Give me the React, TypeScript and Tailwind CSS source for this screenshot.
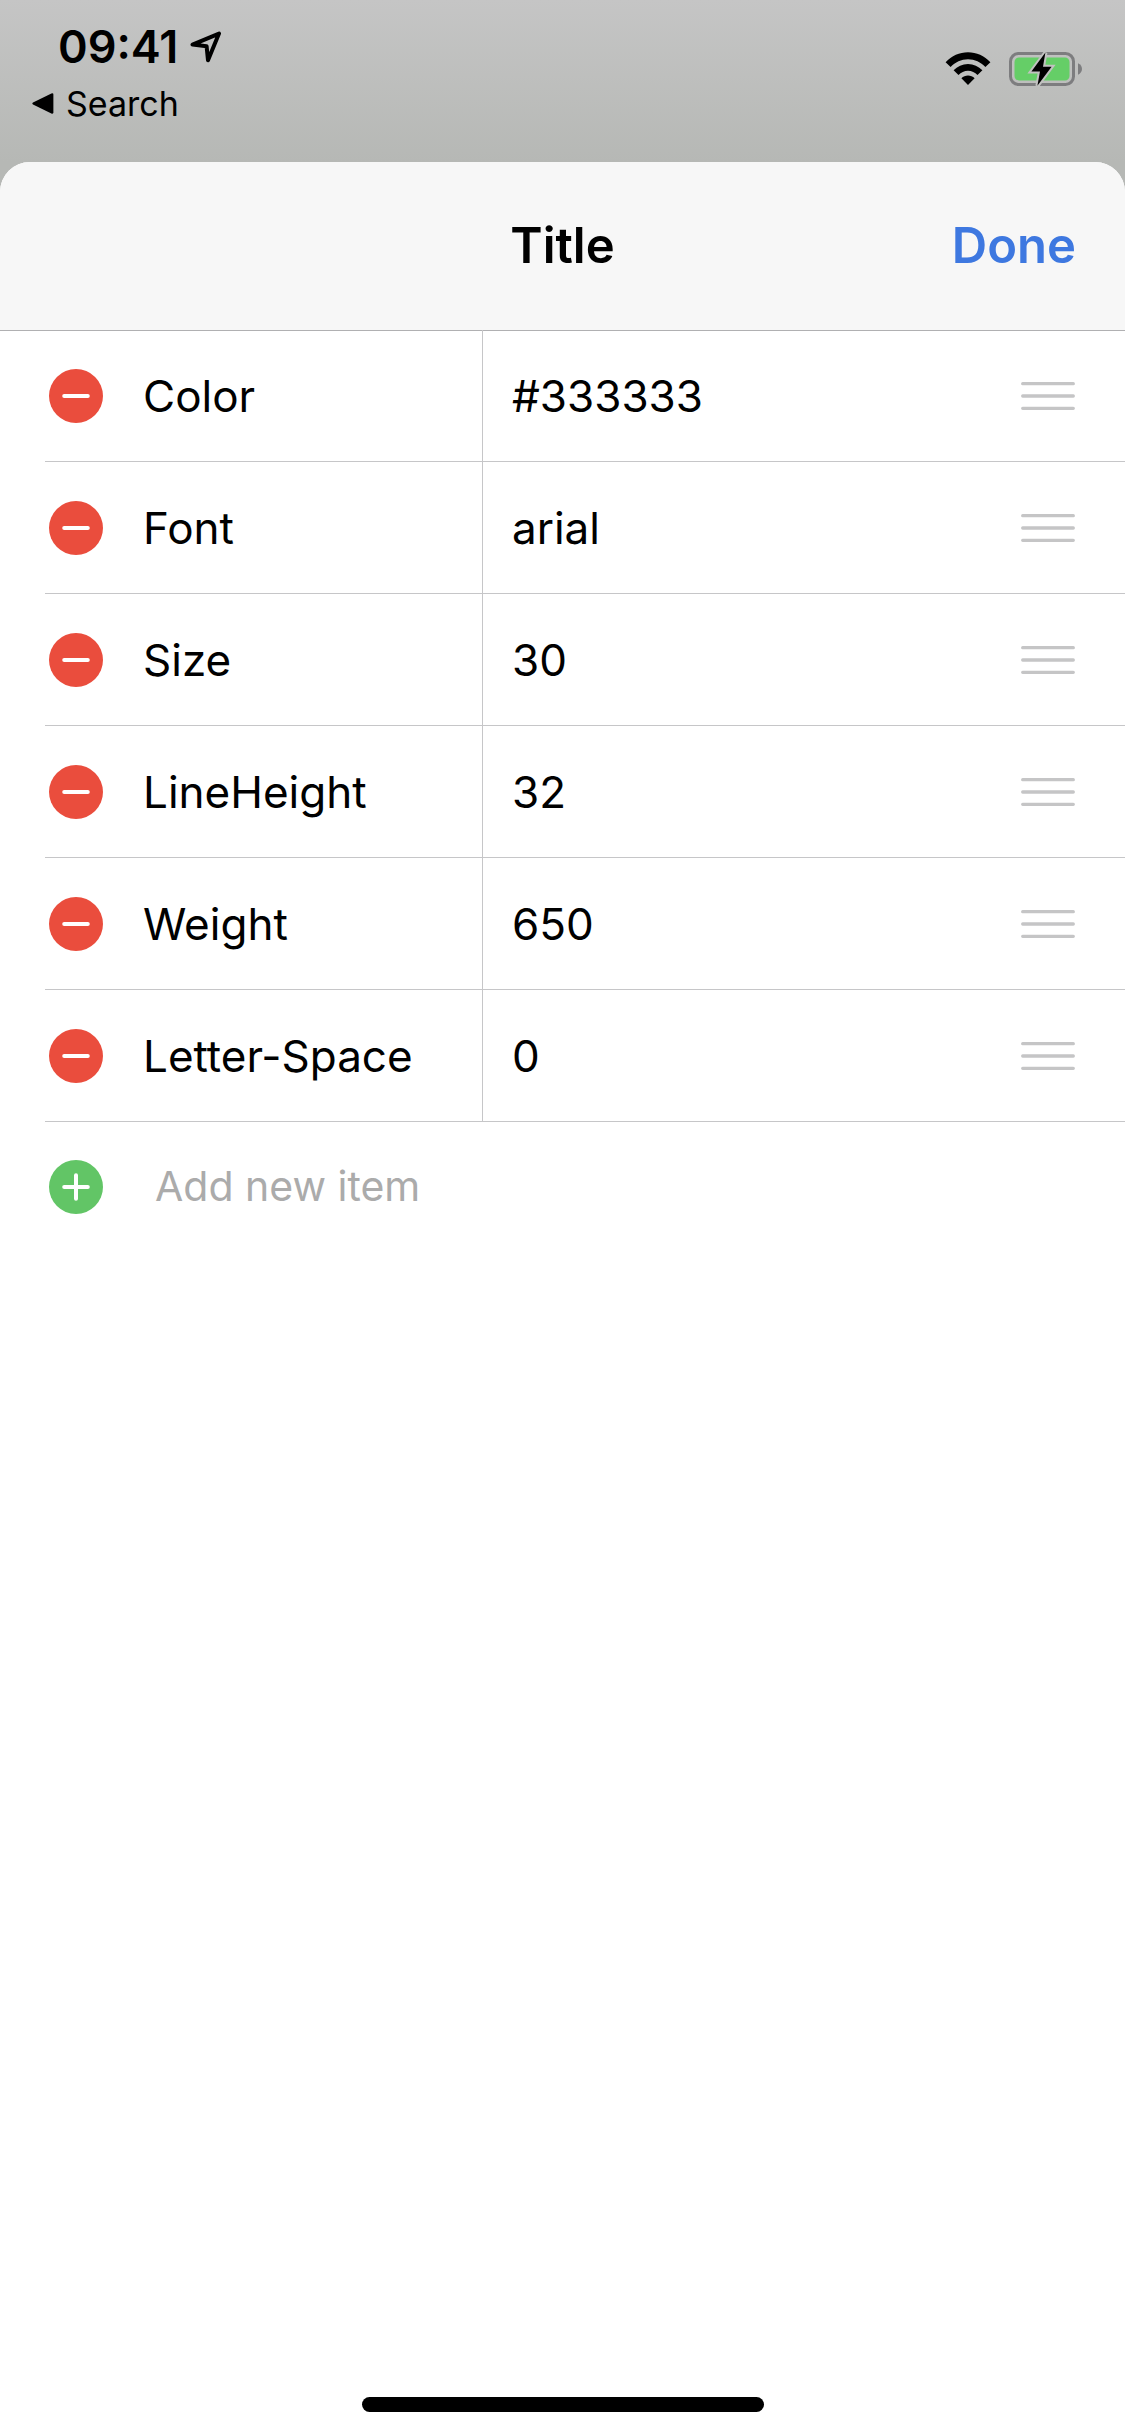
import React, { useState } from 'react';

/**
 * StyleEditorSheet
 * - iOS style modal sheet that lists the attributes of a text style
 * - Rows: remove button / name / value / drag handle, then an "add" row
 */

type Item = { id: string; name: string; value: string };

const initialItems: Item[] = [
    { id: 'color', name: 'Color', value: '#333333' },
    { id: 'font', name: 'Font', value: 'arial' },
    { id: 'size', name: 'Size', value: '30' },
    { id: 'line-height', name: 'LineHeight', value: '32' },
    { id: 'weight', name: 'Weight', value: '650' },
    { id: 'letter-space', name: 'Letter-Space', value: '0' },
];

function LocationIcon() {
    return (
        <svg className="h-8 w-8" viewBox="0 0 32 32" fill="none" stroke="#000" strokeWidth="4" strokeLinejoin="round" aria-hidden="true">
            <path d="M2.5 13.6 29 2.6 18 29.2 16.6 15.2Z" />
        </svg>
    );
}

function WifiIcon() {
    return (
        <svg className="h-[34px] w-[46px]" viewBox="0 0 46 34" aria-hidden="true">
            <path d="M0.6 10.2C6.6 3.9 14.5 0.3 23 0.3S39.4 3.9 45.4 10.2L40.4 15C35.8 10.2 29.7 7.3 23 7.3S10.2 10.2 5.6 15Z" />
            <path d="M8.6 18.2C12.4 14.2 17.4 11.9 23 11.9S33.6 14.2 37.4 18.2L32.5 23C30 20.4 26.7 18.8 23 18.8S16 20.4 13.5 23Z" />
            <path d="M16.4 26.3C18.2 24.5 20.5 23.5 23 23.5S27.8 24.5 29.6 26.3L23 33Z" />
        </svg>
    );
}

function BatteryIcon() {
    return (
        <svg className="h-[38px] w-[74px]" viewBox="0 0 74 38" aria-hidden="true">
            <rect x="1.5" y="3.5" width="63" height="31" rx="8" fill="none" stroke="#7d7d7f" strokeWidth="3" />
            <path d="M69 13.3C71.5 14.4 73 16.5 73 19S71.5 23.6 69 24.7Z" fill="#7d7d7f" />
            <rect x="5.5" y="7.5" width="55" height="23" rx="4.5" fill="#65ce67" />
            <path
                d="M36.4 2.6 22.4 21.4H31L28.4 35.8 42.6 16.8H34Z"
                fill="#000"
                stroke="#c1c2c0"
                strokeWidth="4"
                paintOrder="stroke"
            />
        </svg>
    );
}

function BadgeIcon({ kind }: { kind: 'remove' | 'add' }) {
    return (
        <svg className="h-[54px] w-[54px]" viewBox="0 0 54 54" aria-hidden="true">
            <circle cx="27" cy="27" r="27" fill={kind === 'add' ? '#62c566' : '#ea4d3d'} />
            <path
                d={kind === 'add' ? 'M15.2 27H38.8M27 15.2V38.8' : 'M15.2 27H38.8'}
                stroke="#fff"
                strokeWidth="4"
                strokeLinecap="round"
            />
        </svg>
    );
}

function HandleIcon() {
    return (
        <svg className="h-7 w-[54px]" viewBox="0 0 54 28" aria-hidden="true">
            <path d="M1.7 1.7H52.3M1.7 14H52.3M1.7 26.3H52.3" stroke="#c5c5c6" strokeWidth="3.3" strokeLinecap="round" />
        </svg>
    );
}

function StatusBar() {
    return (
        <div className="flex h-[162px] justify-between bg-linear-to-b from-[#c5c5c5] to-[#b6b8b5] pt-5 pr-[42px] pl-8">
            <div>
                <div className="flex h-[54px] items-center gap-3 pl-[26px]">
                    <span className="text-[45px] font-semibold">09:41</span>
                    <LocationIcon />
                </div>
                <a href="#search" className="flex h-[58px] items-center gap-3 text-[34px]">
                    <svg className="h-[21px] w-[22px]" viewBox="0 0 22 21" aria-hidden="true">
                        <path d="M1 9.4 19.4 0.5Q21.4-0.2 21.4 1.8V19.2Q21.4 21.2 19.4 20.4L1 11.6Q-0.4 10.5 1 9.4Z" />
                    </svg>
                    Search
                </a>
            </div>
            <div className="flex h-[98px] items-center gap-[18px]">
                <WifiIcon />
                <BatteryIcon />
            </div>
        </div>
    );
}

export default function StyleEditorSheet() {
    const [items, setItems] = useState(initialItems);
    const [draft, setDraft] = useState('');

    const remove = (id: string) => setItems(list => list.filter(i => i.id !== id));

    const update = (id: string, value: string) =>
        setItems(list => list.map(i => (i.id === id ? { ...i, value } : i)));

    const add = () => {
        if (!draft.trim()) return;
        setItems(list => [...list, { id: `${draft}-${list.length}`, name: draft, value: '' }]);
        setDraft('');
    };

    return (
        <div className="flex min-h-dvh flex-col bg-[#b6b8b5] font-[Inter,sans-serif] text-black">
            <StatusBar />

            <main className="flex flex-1 flex-col overflow-hidden rounded-t-[30px] bg-white">
                {/* Header */}
                <header className="grid h-[169px] grid-cols-3 items-center border-b border-[#b0b0b2] bg-[#f7f7f7] px-[49px] text-[49px] font-semibold">
                    <h1 className="col-start-2 text-center">Title</h1>
                    <button type="button" className="justify-self-end text-[#3e78e0]">
                        Done
                    </button>
                </header>

                {/* Attributes */}
                <ul className="-mt-px pl-[45px]">
                    {items.map(item => (
                        <li key={item.id} className="flex h-[132px] items-center border-b border-[#c6c6c8] pr-[50px] pl-1 text-[44px]">
                            <button type="button" aria-label={`Remove ${item.name}`} onClick={() => remove(item.id)}>
                                <BadgeIcon kind="remove" />
                            </button>
                            <label
                                htmlFor={item.id}
                                className="flex w-[380px] items-center self-stretch border-r border-[#c6c6c8] pl-10"
                            >
                                {item.name}
                            </label>
                            <input
                                id={item.id}
                                className="min-w-0 flex-1 bg-transparent pl-[29px] outline-none"
                                value={item.value}
                                onChange={e => update(item.id, e.target.value)}
                            />
                            <button type="button" aria-label={`Move ${item.name}`}>
                                <HandleIcon />
                            </button>
                        </li>
                    ))}
                </ul>

                {/* Add row */}
                <div className="flex h-[130px] items-center px-[49px] text-[41px]">
                    <button type="button" aria-label="Add item" onClick={add}>
                        <BadgeIcon kind="add" />
                    </button>
                    <input
                        aria-label="New item name"
                        className="min-w-0 flex-1 bg-transparent pl-[52px] outline-none placeholder:text-[#ababab]"
                        placeholder="Add new item"
                        value={draft}
                        onChange={e => setDraft(e.target.value)}
                    />
                </div>

                {/* Home indicator */}
                <div className="mx-auto mt-auto mb-6 h-[15px] w-[402px] rounded-full bg-black" />
            </main>
        </div>
    );
}
